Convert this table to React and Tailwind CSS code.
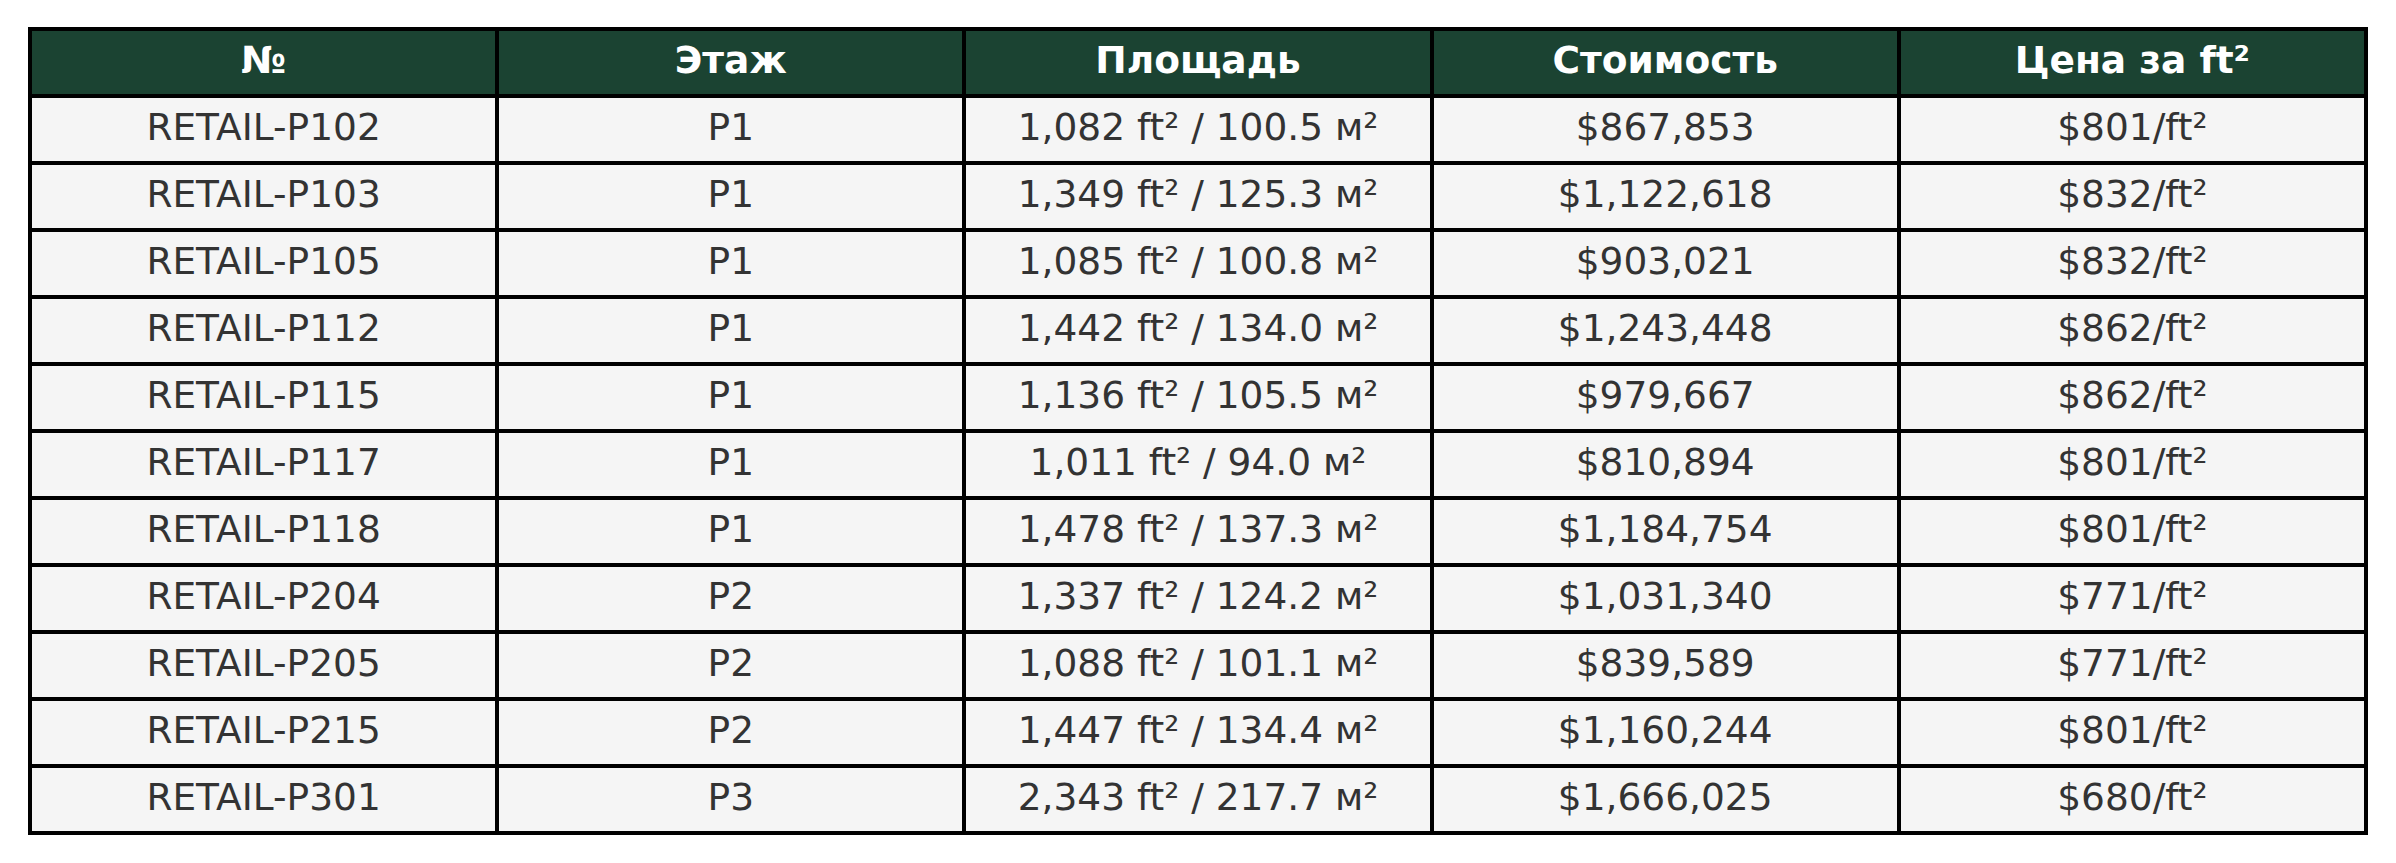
import React from "react";

const headers = ["№", "Этаж", "Площадь", "Стоимость", "Цена за ft²"];
const rows = [
  ["RETAIL-P102", "P1", "1,082 ft² / 100.5 м²", "$867,853", "$801/ft²"],
  ["RETAIL-P103", "P1", "1,349 ft² / 125.3 м²", "$1,122,618", "$832/ft²"],
  ["RETAIL-P105", "P1", "1,085 ft² / 100.8 м²", "$903,021", "$832/ft²"],
  ["RETAIL-P112", "P1", "1,442 ft² / 134.0 м²", "$1,243,448", "$862/ft²"],
  ["RETAIL-P115", "P1", "1,136 ft² / 105.5 м²", "$979,667", "$862/ft²"],
  ["RETAIL-P117", "P1", "1,011 ft² / 94.0 м²", "$810,894", "$801/ft²"],
  ["RETAIL-P118", "P1", "1,478 ft² / 137.3 м²", "$1,184,754", "$801/ft²"],
  ["RETAIL-P204", "P2", "1,337 ft² / 124.2 м²", "$1,031,340", "$771/ft²"],
  ["RETAIL-P205", "P2", "1,088 ft² / 101.1 м²", "$839,589", "$771/ft²"],
  ["RETAIL-P215", "P2", "1,447 ft² / 134.4 м²", "$1,160,244", "$801/ft²"],
  ["RETAIL-P301", "P3", "2,343 ft² / 217.7 м²", "$1,666,025", "$680/ft²"],
];

export default function App() {
  return (
    <div
      className="w-[2396px] h-[863px] bg-white pt-[27px] pl-[28px]"
      style={{ fontFamily: '"DejaVu Sans", sans-serif' }}
    >
      <div className="w-[2340px] bg-black p-[4px] grid grid-cols-5 gap-[4px] auto-rows-[63px]">
        {headers.map((h, i) => (
          <div
            key={"h" + i}
            className="bg-[#1b4332] text-white font-bold text-[37.5px] leading-none flex items-center justify-center pb-[4px]"
          >
            {h}
          </div>
        ))}
        {rows.map((r, ri) =>
          r.map((c, ci) => (
            <div
              key={ri + "-" + ci}
              className="bg-[#f5f5f5] text-[#333333] text-[37.5px] leading-none flex items-center justify-center pb-[3px]"
            >
              {c}
            </div>
          ))
        )}
      </div>
    </div>
  );
}
